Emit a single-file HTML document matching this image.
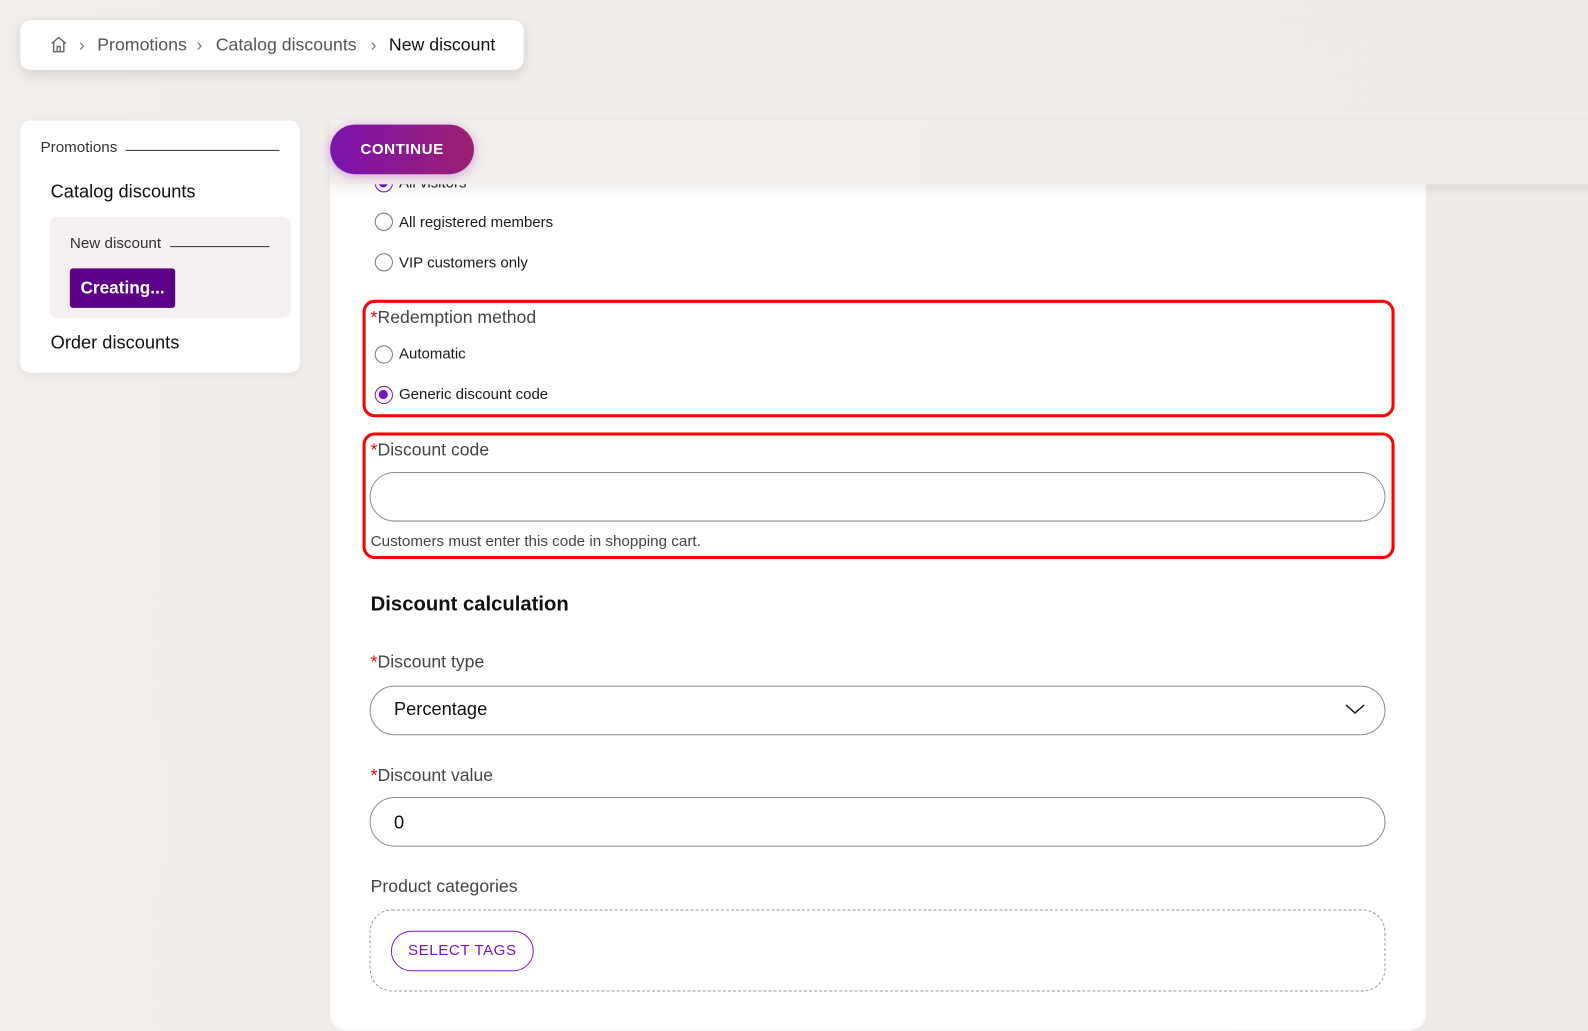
<!DOCTYPE html>
<html><head><meta charset="utf-8">
<style>
*{box-sizing:border-box;margin:0;padding:0}
body{width:1588px;height:1031px;overflow:hidden;background:linear-gradient(90deg,#f1edeb,#efe9e7);font-family:"Liberation Sans",sans-serif;color:#1a1a1a}
#w{position:absolute;left:0;top:0;width:1568px;height:1018px;transform:scale(1.01276);transform-origin:0 0}
.a{position:absolute}
.crumb{left:20px;top:20px;width:497px;height:49px;background:#fff;border-radius:10px;box-shadow:0 4px 12px rgba(0,0,0,.12)}
.crumb span{position:absolute;top:14px;font-size:17.5px;color:#555}
.side{left:20px;top:119px;width:276px;height:249px;background:#fff;border-radius:10px;box-shadow:0 2px 8px rgba(0,0,0,.05)}
.card{left:326px;top:150px;width:1082px;height:867px;background:#fff;border-radius:0 0 16px 16px}
.bar{left:326px;top:118px;width:1262px;height:64px;background:linear-gradient(90deg,#f2eeec,#efebe9);box-shadow:0 4px 10px rgba(0,0,0,.08)}
.btn{left:326px;top:123px;width:142px;height:49px;border-radius:25px;background:linear-gradient(90deg,#7c12b0,#9a2070);color:#fff;font-weight:bold;font-size:15px;letter-spacing:.5px;text-align:center;line-height:49px;box-shadow:0 2px 10px rgba(140,30,180,.35)}
.radio{width:18px;height:18px;border:1.5px solid #777;border-radius:50%}
.radio.on{border-color:#7d12c0}
.radio.on::after{content:"";position:absolute;left:3px;top:3px;width:9px;height:9px;border-radius:50%;background:#7d12c0}
.rl{font-size:14.8px;color:#1a1a1a}
.red{border:3px solid #f00;border-radius:12px}
.lbl{font-size:17.4px;color:#444}
.lbl b{color:#e00;font-weight:normal}
.inp{left:365px;width:1003px;height:49px;border:1px solid #8c8c8c;border-radius:25px}
</style></head><body><div id="w">
<div class="a crumb">
<svg class="a" style="left:29px;top:15px" width="18" height="18" viewBox="0 0 18 18" fill="none" stroke="#666" stroke-width="1.4"><path d="M2 8 L9 2 L16 8 M4 6.5 V16 H14 V6.5 M7.5 16 V11 H10.5 V16"/></svg>
<span style="left:58px;color:#777">›</span>
<span style="left:76px">Promotions</span>
<span style="left:174px;color:#777">›</span>
<span style="left:193px">Catalog discounts</span>
<span style="left:346px;color:#777">›</span>
<span style="left:364px;color:#111">New discount</span>
</div>

<div class="a side">
<div class="a" style="left:20px;top:18px;font-size:15px;color:#333">Promotions</div>
<div class="a" style="left:104px;top:29px;width:152px;border-top:1px solid #333"></div>
<div class="a" style="left:30px;top:60px;font-size:18px;color:#111">Catalog discounts</div>
<div class="a" style="left:29px;top:95px;width:238px;height:100px;background:#f3f0ef;border-radius:8px">
<div class="a" style="left:20px;top:18px;font-size:15px;color:#333">New discount</div>
<div class="a" style="left:119px;top:29px;width:98px;border-top:1px solid #333"></div>
<div class="a" style="left:20px;top:51px;width:104px;height:39px;background:#5c0087;border-radius:3px;color:#fff;font-size:17px;font-weight:bold;text-align:center;line-height:39px">Creating...</div>
</div>
<div class="a" style="left:30px;top:209px;font-size:18px;color:#111">Order discounts</div>
</div>

<div class="a card"></div>
<div class="a radio on" style="left:370px;top:172px"></div>
<div class="a rl" style="left:394px;top:173px">All visitors</div>
<div class="a bar"></div>
<div class="a btn">CONTINUE</div>

<div class="a radio" style="left:370px;top:210px"></div>
<div class="a rl" style="left:394px;top:212px">All registered members</div>
<div class="a radio" style="left:370px;top:250px"></div>
<div class="a rl" style="left:394px;top:252px">VIP customers only</div>

<div class="a red" style="left:358px;top:296px;width:1019px;height:116px"></div>
<div class="a lbl" style="left:366px;top:303px"><b>*</b>Redemption method</div>
<div class="a radio" style="left:370px;top:341px"></div>
<div class="a rl" style="left:394px;top:342px">Automatic</div>
<div class="a radio on" style="left:370px;top:381px"></div>
<div class="a rl" style="left:394px;top:382px">Generic discount code</div>

<div class="a red" style="left:358px;top:427px;width:1019px;height:125px"></div>
<div class="a lbl" style="left:366px;top:434px"><b>*</b>Discount code</div>
<div class="a inp" style="top:466px"></div>
<div class="a" style="left:366px;top:526px;font-size:15px;color:#444">Customers must enter this code in shopping cart.</div>

<div class="a" style="left:366px;top:586px;font-size:20px;font-weight:bold;color:#111">Discount calculation</div>

<div class="a lbl" style="left:366px;top:643px"><b>*</b>Discount type</div>
<div class="a inp" style="top:677px"></div>
<div class="a" style="left:389px;top:690px;font-size:18px;color:#111">Percentage</div>
<svg class="a" style="left:1328px;top:694px" width="20" height="12" viewBox="0 0 20 12" fill="none" stroke="#222" stroke-width="1.5"><path d="M1 2 L10 10 L19 2"/></svg>

<div class="a lbl" style="left:366px;top:755px"><b>*</b>Discount value</div>
<div class="a inp" style="top:787px"></div>
<div class="a" style="left:389px;top:802px;font-size:18px;color:#111">0</div>

<div class="a lbl" style="left:366px;top:865px">Product categories</div>
<div class="a" style="left:365px;top:898px;width:1003px;height:81px;border:1px dashed #999;border-radius:22px"></div>
<div class="a" style="left:386px;top:919px;width:141px;height:40px;border:1.5px solid #8a14c0;border-radius:20px;color:#7d12b8;font-size:15px;text-align:center;line-height:37px;letter-spacing:.5px">SELECT TAGS</div>
</div></body></html>
